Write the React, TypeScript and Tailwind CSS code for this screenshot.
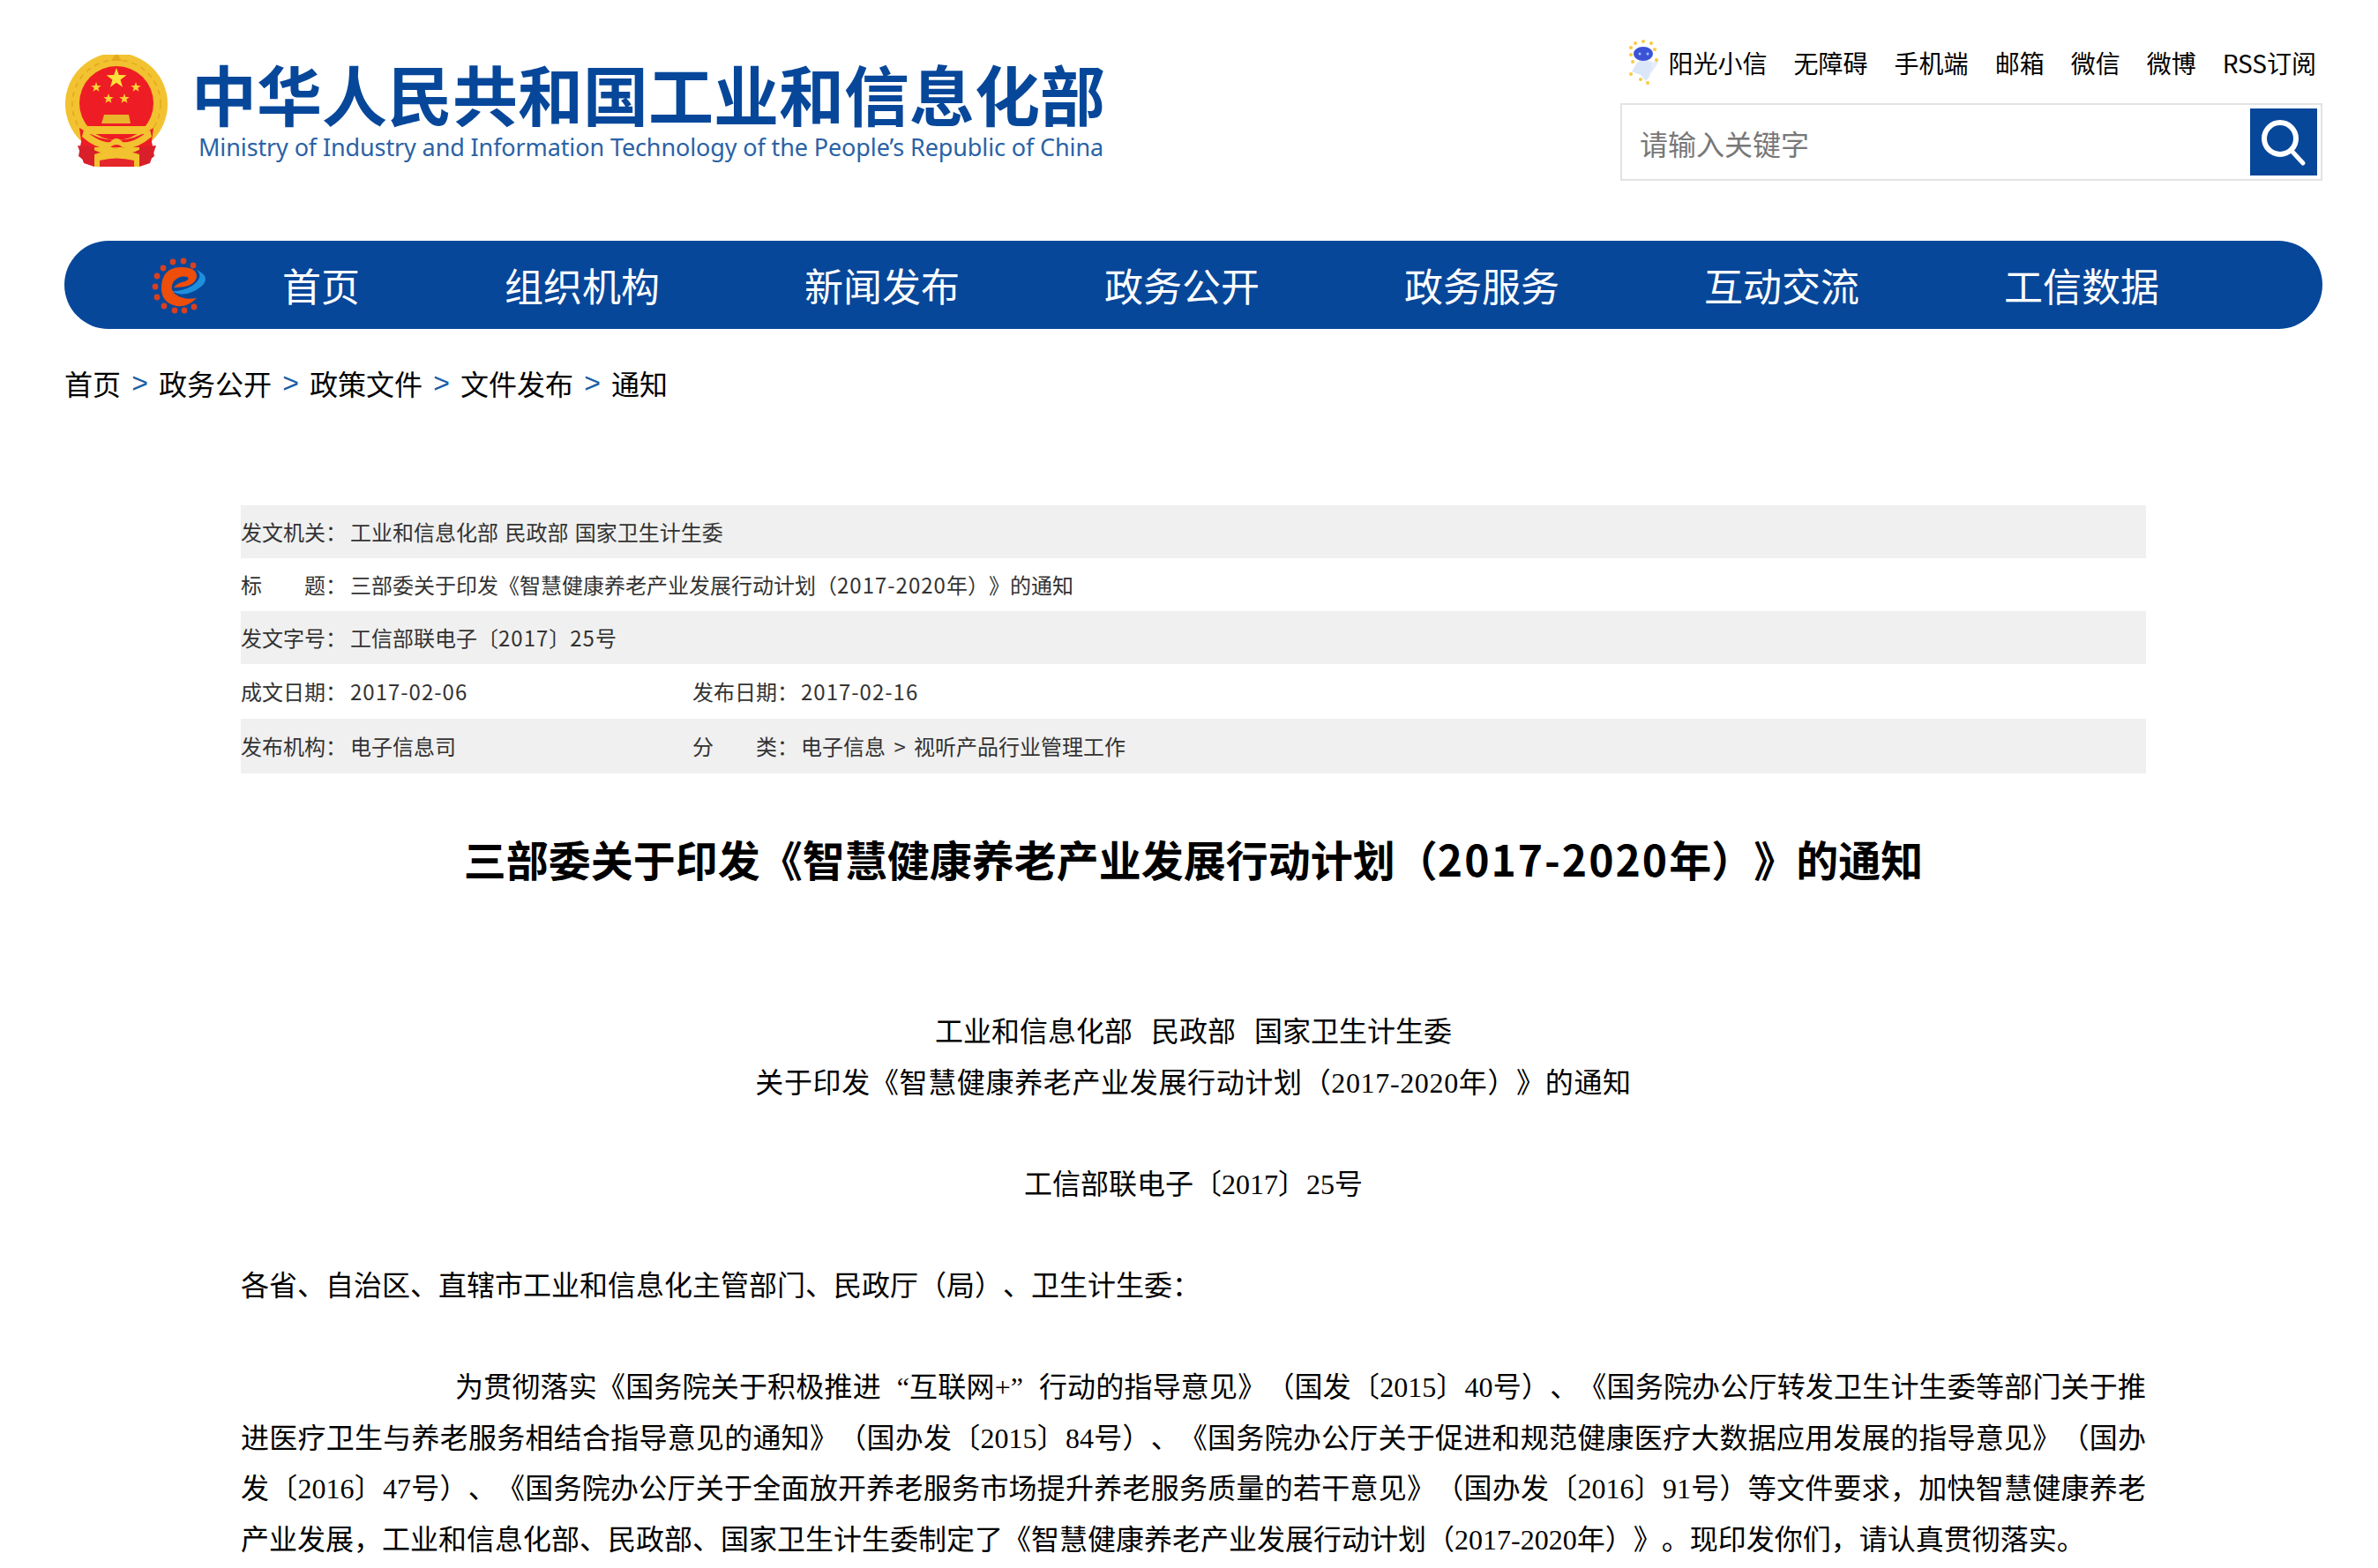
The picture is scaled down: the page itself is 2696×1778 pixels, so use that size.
import type { ReactNode } from "react";

const links = ["无障碍", "手机端", "邮箱", "微信", "微博", "RSS订阅"];
const navItems = ["首页", "组织机构", "新闻发布", "政务公开", "政务服务", "互动交流", "工信数据"];
const crumbs = ["首页", "政务公开", "政策文件", "文件发布", "通知"];

// five pointed star for the emblem
function starPoints(cx: number, cy: number, r: number) {
  const pts: string[] = [];
  for (let i = 0; i < 10; i++) {
    const rad = i % 2 === 0 ? r : r * 0.4;
    const a = (Math.PI / 5) * i - Math.PI / 2;
    pts.push(`${cx + rad * Math.cos(a)},${cy + rad * Math.sin(a)}`);
  }
  return pts.join(" ");
}

function Emblem() {
  return (
    <svg viewBox="8 7 119 128" className="w-[119px] h-[128px] shrink-0">
      <path d="M24 122 L28 100 H106 L110 122 L100 130 H34 Z" fill="#d9202a" />
      <circle cx="67" cy="63" r="58" fill="#f2c230" />
      <circle cx="67" cy="63" r="50" fill="none" stroke="#e2a91f" strokeWidth="1.5" strokeDasharray="6 5" />
      <path d="M67 5 L73 14 H61 Z" fill="#e2a91f" />
      <circle cx="67" cy="62" r="42" fill="#ee1c25" />
      <path d="M25 90 Q67 118 109 90 L106 112 H28 Z" fill="#ee1c25" />
      <polygon points={starPoints(67, 34, 12)} fill="#fde13a" />
      <polygon points={starPoints(44, 44, 6)} fill="#fbd235" />
      <polygon points={starPoints(89, 44, 6)} fill="#fbd235" />
      <polygon points={starPoints(58, 57, 6)} fill="#fbd235" />
      <polygon points={starPoints(76, 57, 6)} fill="#fbd235" />
      <path d="M53 75 H81 L83 85 H50 Z" fill="#e9b52c" />
      <rect x="32" y="88" width="71" height="9" fill="#f2c230" />
      <path d="M30 92 Q50 108 60 106 Q67 98 74 106 Q86 108 105 92 L107 100 Q88 116 74 112 Q67 106 60 112 Q46 116 28 100 Z" fill="#f2c230" />
      <path d="M23 110 L42 112 V134 L30 130 Z" fill="#d9202a" />
      <path d="M112 110 L93 112 V134 L105 130 Z" fill="#d9202a" />
      <path d="M42 120 Q67 112 93 120 V134 H42 Z" fill="#f2c230" />
      <path d="M48 127 Q67 122 87 127 V134 H48 Z" fill="#e5262b" />
    </svg>
  );
}

function Robot() {
  return (
    <svg viewBox="10 8 36 56" className="w-[36px] h-[56px] shrink-0">
      <path d="M20 36 Q27 30 38 36 L34 52 L30 57 L24 50 L14 46 Z" fill="#dbe7f8" />
      <path d="M36 38 L42 32 L44 36 L36 48 Z" fill="#e4edf9" />
      <ellipse cx="27" cy="26" rx="11" ry="8" fill="#3c52d6" />
      <circle cx="23" cy="26" r="1.5" fill="#9cc8ff" />
      <circle cx="32" cy="26" r="1.5" fill="#9cc8ff" />
      {[[18, 14], [27, 12], [36, 14], [13, 19], [40, 21], [13, 27], [15, 35], [42, 33], [13, 49], [24, 55], [32, 59]].map(([x, y]) => (
        <circle key={`${x}-${y}`} cx={x} cy={y} r="2" fill="#fbc93d" />
      ))}
    </svg>
  );
}

function GearLogo() {
  const dots = [[36, 16], [48, 15], [59, 20], [25, 23], [18, 32], [16, 44], [18, 56], [26, 66], [38, 71], [49, 71], [60, 67]];
  return (
    <svg viewBox="12 10 65 65" className="w-[65px] h-[65px] shrink-0">
      {dots.map(([x, y]) => (
        <circle key={`${x}-${y}`} cx={x} cy={y} r="3.4" fill="#d9401f" />
      ))}
      <path d="M34 49 Q50 58 68 44 Q80 33 63 25 Q72 33 58 43 Q46 50 34 49 Z" fill="#1f8fdd" />
      <path d="M63 57 Q52 68 40 66 Q22 62 23 44 Q24 23 44 22 Q62 21 63 32 Q62 45 37 45 Q40 40 50 38 Q56 35 52 33 Q44 31 37 38 Q32 46 38 52 Q48 60 63 57 Z" fill="#ee4d0a" />
    </svg>
  );
}

function SearchIcon() {
  return (
    <svg viewBox="0 0 76 76" className="w-[76px] h-[76px]" fill="none" stroke="white" strokeLinecap="round">
      <circle cx="34" cy="34" r="18" strokeWidth="6" />
      <path d="M47 48 L60 62" strokeWidth="5" />
    </svg>
  );
}

// digits in the meta table run a little wider than the CJK font gives
function Num({ children }: { children: ReactNode }) {
  return <span className="tracking-[1px]">{children}</span>;
}

function MetaRow({ shaded, label, value, label2, value2, h }: { shaded?: boolean; label: string; value: ReactNode; label2?: string; value2?: ReactNode; h: string }) {
  return (
    <div className={`flex items-center ${h} ${shaded ? "bg-[#f0f0f0]" : ""}`}>
      <span className="w-[124px] shrink-0">{label}</span>
      <span className="w-[388px] shrink-0 whitespace-nowrap">{value}</span>
      {label2 && <span className="w-[123px] shrink-0">{label2}</span>}
      {value2 && <span className="whitespace-nowrap">{value2}</span>}
    </div>
  );
}

export default function App() {
  return (
    <div lang="zh-CN" className="h-[1778px] overflow-hidden bg-white pl-[73px] pr-[63px] text-black [text-spacing-trim:space-all] font-['Noto_Sans_CJK_SC','Noto_Sans',sans-serif]">
      {/* header */}
      <div className="flex justify-between h-[273px]">
        <div className="flex pt-[62px]">
          <Emblem />
          <div className="ml-[25px] -mt-[2px]">
            <div className="text-[74px] leading-[90px] font-bold text-[#07479a] whitespace-nowrap">中华人民共和国工业和信息化部</div>
            <div className="text-[27px] leading-[34px] ml-[8px] tracking-[-0.12px] text-[#2a62a6] whitespace-nowrap font-['Noto_Sans',sans-serif]">Ministry of Industry and Information Technology of the People’s Republic of China</div>
          </div>
        </div>
        <div className="w-[796px] pt-[41px]">
          <div className="flex items-center justify-end h-[60px] text-[28px] gap-[30px] pr-[7px]">
            <div className="flex items-center">
              <Robot />
              <span className="ml-[10px]">阳光小信</span>
            </div>
            {links.map((l) => (
              <span key={l}>{l}</span>
            ))}
          </div>
          <div className="mt-[16px] h-[88px] border-2 border-[#e3e3e3] flex items-center justify-between pl-[20px] pr-[4px]">
            <span className="text-[32px] text-[#777777] mt-[2px]">请输入关键字</span>
            <div className="w-[76px] h-[76px] bg-[#07479a]">
              <SearchIcon />
            </div>
          </div>
        </div>
      </div>

      {/* nav */}
      <div className="h-[100px] rounded-[50px] bg-[#07479a] flex items-center pl-[99px] text-white text-[44px]">
        <GearLogo />
        <div className="flex gap-[164px] ml-[83px]">
          {navItems.map((n) => (
            <span key={n}>{n}</span>
          ))}
        </div>
      </div>

      {/* breadcrumb */}
      <div className="flex items-center h-[42px] mt-[40px] text-[32px]">
        {crumbs.map((c, i) => (
          <div key={c} className="flex items-center">
            {i > 0 && <span className="w-[43px] text-center text-[#1a5ea8] font-['Liberation_Sans',sans-serif]">&gt;</span>}
            <span>{c}</span>
          </div>
        ))}
      </div>

      {/* article */}
      <div className="ml-[200px] w-[2160px]">
        <div className="mt-[118px] text-[24px] text-[#333333]">
          <MetaRow shaded h="h-[60px]" label="发文机关：" value={<span className="[word-spacing:2px]">工业和信息化部 民政部 国家卫生计生委</span>} />
          <MetaRow h="h-[60px]" label="标　　题：" value={<>三部委关于印发《智慧健康养老产业发展行动计划（<Num>2017-2020</Num>年）》的通知</>} />
          <MetaRow shaded h="h-[60px]" label="发文字号：" value={<>工信部联电子〔<Num>2017</Num>〕<Num>25</Num>号</>} />
          <MetaRow h="h-[62px]" label="成文日期：" value={<Num>2017-02-06</Num>} label2="发布日期：" value2={<Num>2017-02-16</Num>} />
          <MetaRow shaded h="h-[62px]" label="发布机构：" value="电子信息司" label2="分　　类：" value2={<span className="[word-spacing:4px]">电子信息 &gt; 视听产品行业管理工作</span>} />
        </div>

        <h1 className="mt-[63px] h-[66px] text-center text-[48px] leading-[66px] font-bold whitespace-nowrap">三部委关于印发《智慧健康养老产业发展行动计划（<span className="tracking-[2px]">2017-2020</span>年）》的通知</h1>

        <div className="mt-[136px] text-[32px] leading-[57.6px] font-['Liberation_Serif','Noto_Sans_CJK_SC',serif]">
          <p className="text-center [word-spacing:13px]">工业和信息化部 民政部 国家卫生计生委</p>
          <p className="text-center tracking-[0.65px]">关于印发《智慧健康养老产业发展行动计划（2017-2020年）》的通知</p>
          <p className="mt-[57.6px] text-center">工信部联电子〔2017〕25号</p>
          <p className="mt-[57.6px]">各省、自治区、直辖市工业和信息化主管部门、民政厅（局）、卫生计生委：</p>
          <p className="mt-[57.6px] indent-[243px] text-justify">为贯彻落实《国务院关于积极推进<span className="inline-block w-[32px] indent-0 text-right">“</span>互联网+<span className="inline-block w-[32px] indent-0 text-left">”</span>行动的指导意见》（国发〔2015〕40号）、《国务院办公厅转发卫生计生委等部门关于推进医疗卫生与养老服务相结合指导意见的通知》（国办发〔2015〕84号）、《国务院办公厅关于促进和规范健康医疗大数据应用发展的指导意见》（国办发〔2016〕47号）、《国务院办公厅关于全面放开养老服务市场提升养老服务质量的若干意见》（国办发〔2016〕91号）等文件要求，加快智慧健康养老产业发展，工业和信息化部、民政部、国家卫生计生委制定了《智慧健康养老产业发展行动计划（2017-2020年）》。现印发你们，请认真贯彻落实。</p>
        </div>
      </div>
    </div>
  );
}
